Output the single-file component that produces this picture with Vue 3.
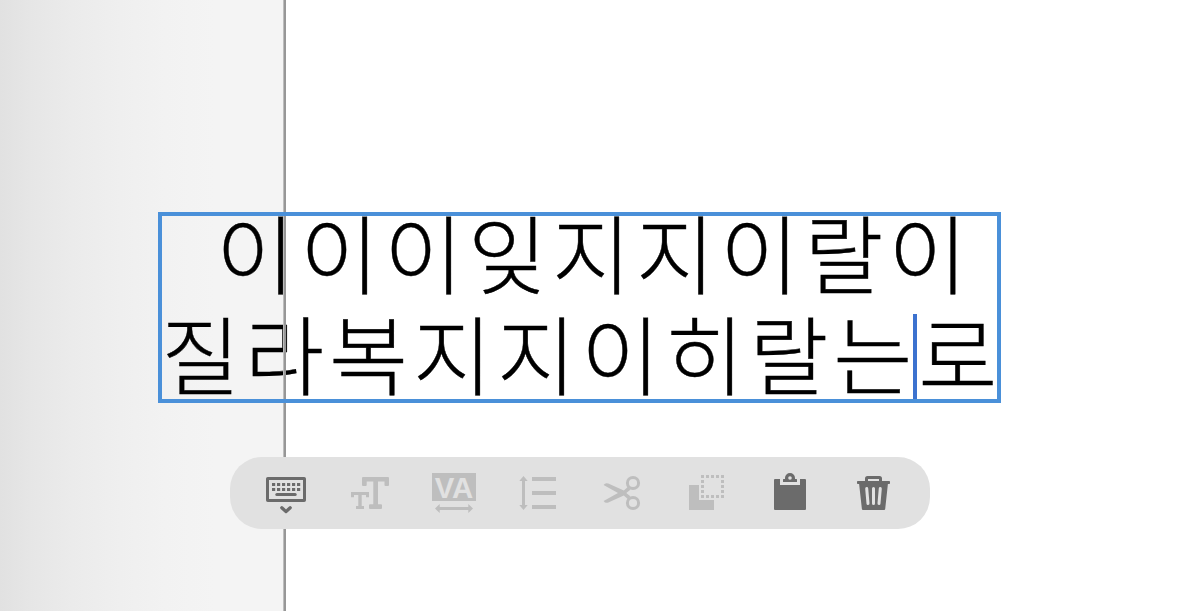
<template>
  <div class="workspace">
    <div class="pasteboard"></div>
    <div class="sheet"></div>

    <div class="text-frame">
      <p
        v-for="(line, index) in lines"
        :key="index"
        class="text-line"
        :class="{ indented: index === 0 }"
      >{{ line.before }}<span v-if="line.after" class="caret"></span>{{ line.after }}</p>
    </div>
    <div class="page-edge"></div>
    <div class="frame-outline"></div>

    <div class="toolbar">
      <button
        v-for="tool in tools"
        :key="tool.name"
        class="tool"
        :class="{ active: tool.enabled }"
        :disabled="!tool.enabled"
        :aria-label="tool.name"
      >
        <svg v-if="tool.name === 'keyboard'" viewBox="0 0 48 48">
          <rect class="stroke" x="5.5" y="9.5" width="37" height="22" rx="0.3" />
          <path class="dashes" d="M10 15.6H39M10 20.6H39" />
          <path class="stroke round" d="M14.8 25.5H33.2" />
          <path class="chevron" d="M19.8 38.8L24 42.6L28.2 38.8" />
        </svg>

        <svg v-else-if="tool.name === 'size'" viewBox="0 0 48 48">
          <path d="M17 8H42Q43 8 43 9V16Q43 17 42 17H39.5Q38.5 17 38.5 16V12.5H32V35.3H35Q36 35.3 36 36.3V39Q36 40 35 40H24Q23 40 23 39V36.3Q23 35.3 24 35.3H27.3V12.5H20.7V16Q20.7 17 19.7 17H17Q16 17 16 16V9Q16 8 17 8Z" />
          <path d="M5 23H23V28.3H20V26H15.7V37H18V40H10V37H12.3V26H8V28.3H5Z" />
        </svg>

        <svg v-else-if="tool.name === 'tracking'" viewBox="0 0 48 48">
          <rect x="2" y="4" width="44" height="28" />
          <text x="4.7" y="29" textLength="38.6" lengthAdjust="spacingAndGlyphs">VA</text>
          <path d="M5 39.5L9.7 35V38H38.3V35L43 39.5L38.3 44V41H9.7V44Z" />
        </svg>

        <svg v-else-if="tool.name === 'leading'" viewBox="0 0 48 48">
          <path d="M9.5 7L13.7 12H11V36H13.7L9.5 41L5.3 36H8V12H5.3Z" />
          <path d="M18 8H42V12H18ZM18 22H42V26H18ZM18 36H42V40H18Z" />
        </svg>

        <svg v-else-if="tool.name === 'cut'" viewBox="0 0 48 48">
          <circle class="stroke" cx="35" cy="14" r="5.6" />
          <circle class="stroke" cx="35" cy="34" r="5.6" />
          <path d="M5.6 16Q7.5 13.2 10.3 14.6L25.8 21.6L30 17.8L32.3 20.7L28.3 24L32.3 27.3L30 30.2L25.8 26.4L10.3 33.4Q7.5 34.8 5.6 32L20 24Z" />
        </svg>

        <svg v-else-if="tool.name === 'copy'" viewBox="0 0 48 48">
          <path d="M7 16H17V31H32V41H7Z" />
          <path class="dots" d="M19 7.5H42M19 27.5H42" />
          <path class="dots" d="M20.5 11V24M40.5 11V24" />
        </svg>

        <svg v-else-if="tool.name === 'paste'" viewBox="0 0 48 48">
          <path d="M9 10H14V16H34V10H39Q40 10 40 11V40Q40 41 39 41H9Q8 41 8 40V11Q8 10 9 10Z" />
          <path fill-rule="evenodd" d="M17 13V10.5Q17 10 17.5 10H19V9A5 5 0 0 1 29 9V10H30.5Q31 10 31 10.5V13ZM24 7.2A1.8 1.8 0 1 0 24 10.8A1.8 1.8 0 1 0 24 7.2Z" />
        </svg>

        <svg v-else viewBox="0 0 48 48">
          <path class="stroke" d="M16.5 13V9.5Q16.5 8.5 17.5 8.5H29.5Q30.5 8.5 30.5 9.5V13" />
          <rect x="7" y="12" width="33" height="3" rx="0.8" />
          <path d="M9 14H38L35.2 40Q35.1 41 34.1 41H13Q12 41 11.9 40Z" />
          <path class="slots" d="M16.7 19.5L18 34.5M23.5 19.5V34.5M30.3 19.5L29 34.5" />
        </svg>
      </button>
    </div>
  </div>
</template>

<script setup>
import { ref } from 'vue';

// The caret sits between the two parts of a line
const lines = ref([
  { before: '이이이잊지지이랄이', after: '' },
  { before: '질라복지지이히랄는', after: '로' }
]);

const tools = [
  { name: 'keyboard', enabled: true },
  { name: 'size', enabled: false },
  { name: 'tracking', enabled: false },
  { name: 'leading', enabled: false },
  { name: 'cut', enabled: false },
  { name: 'copy', enabled: false },
  { name: 'paste', enabled: true },
  { name: 'delete', enabled: true }
];
</script>

<style>
body {
  margin: 0;
  overflow: hidden;
}
</style>

<style scoped>
.workspace {
  position: relative;
  display: grid;
  grid-template-columns: 285px 1fr;
  height: 100vh;
  overflow: hidden;
  background: #fff;
}

.pasteboard {
  background: linear-gradient(to right, #e1e1e1 0, #e6e6e6 30px, #ebebeb 72px, #efefef 120px, #f2f2f2 165px, #f4f4f4 215px, #f4f4f4 285px);
}

.sheet {
  background: #fff;
}

.page-edge {
  position: absolute;
  top: 0;
  bottom: 0;
  left: 283px;
  width: 2px;
  background: #979797;
  border-left: 1px solid #bdbdbd;
}

/* Text object on the canvas */
.text-frame {
  position: absolute;
  left: 161px;
  top: 200px;
  width: 840px;
}

.text-line {
  margin: 0;
  height: 101px;
  font-family: 'Noto Sans CJK KR', sans-serif;
  font-size: 86px;
  font-weight: 300;
  line-height: 101px;
  letter-spacing: 4.9px;
  white-space: nowrap;
  color: #000;
  -webkit-text-stroke: 0.4px #000;
}

.text-line.indented {
  padding-left: 55px;
}

.caret {
  display: inline-block;
  width: 4px;
  height: 86px;
  margin: 0 1px 0 -4px;
  vertical-align: -11px;
  background: #3c72cf;
}

.frame-outline {
  position: absolute;
  left: 158px;
  top: 212px;
  width: 835px;
  height: 183px;
  border: 4px solid #4a90d9;
}

/* Floating edit bar */
.toolbar {
  position: absolute;
  left: 230px;
  top: 457px;
  width: 700px;
  height: 72px;
  box-sizing: border-box;
  padding: 0 14px;
  display: grid;
  grid-template-columns: repeat(8, 84px);
  border-radius: 32px;
  background: #e1e1e1;
}

.tool {
  display: flex;
  align-items: center;
  justify-content: center;
  padding: 0;
  border: none;
  background: none;
  color: #bebebe;
}

.tool.active {
  color: #6b6b6b;
}

.tool svg {
  display: block;
  width: 48px;
  height: 48px;
  fill: currentColor;
}

.tool .stroke,
.tool .dashes,
.tool .dots,
.tool .chevron,
.tool .slots {
  fill: none;
  stroke: currentColor;
  stroke-width: 3;
}

.tool .round {
  stroke-linecap: round;
}

.tool .dashes {
  stroke-dasharray: 3.2 1.8;
}

.tool .dots {
  stroke-dasharray: 3 2;
}

.tool .chevron {
  stroke-width: 3.3;
  stroke-linecap: round;
  stroke-linejoin: round;
}

.tool .slots {
  stroke: #e1e1e1;
  stroke-linecap: round;
}

.tool text {
  fill: #e1e1e1;
  font-family: 'Liberation Sans', Arial, sans-serif;
  font-size: 30px;
  font-weight: 700;
}
</style>
